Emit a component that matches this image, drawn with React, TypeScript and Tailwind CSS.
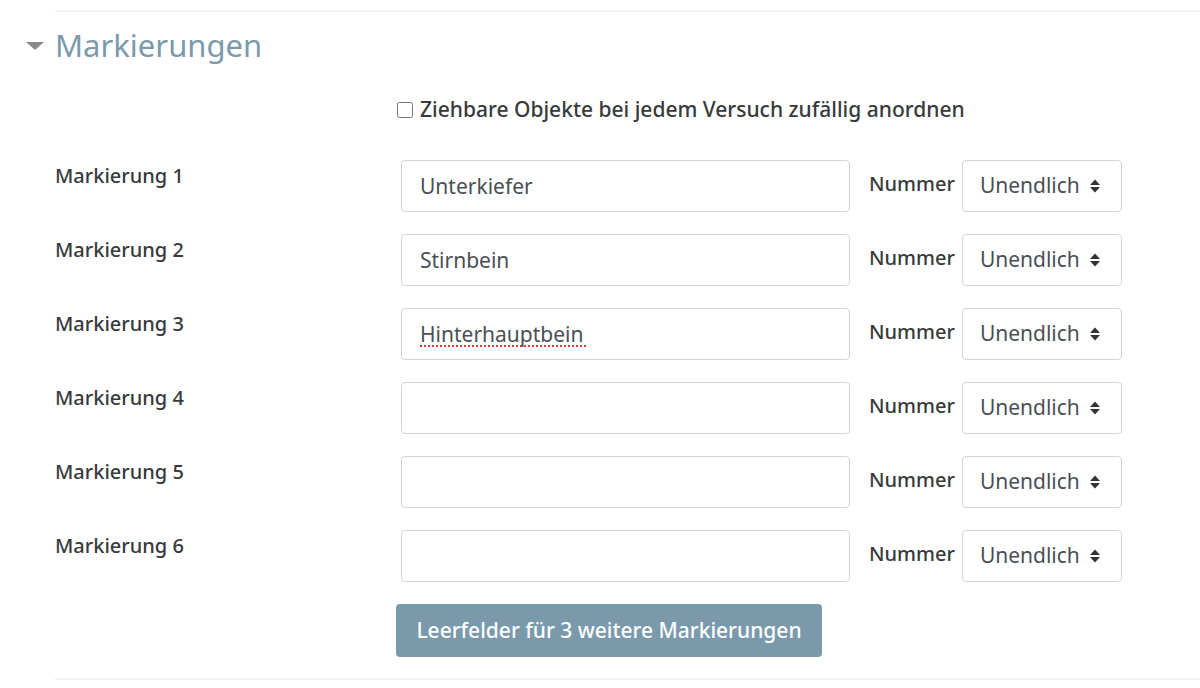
import React, { useState } from "react";

const rows = [
  { label: "Markierung 1", value: "Unterkiefer" },
  { label: "Markierung 2", value: "Stirnbein" },
  { label: "Markierung 3", value: "Hinterhauptbein" },
  { label: "Markierung 4", value: "" },
  { label: "Markierung 5", value: "" },
  { label: "Markierung 6", value: "" },
];

const App = () => {
  const [shuffle, setShuffle] = useState(false);
  const [values, setValues] = useState(rows.map((r) => r.value));

  return (
    <div
      className="w-[1200px] h-[688px] bg-white overflow-hidden text-[#373a3c]"
      style={{ fontFamily: '"Noto Sans", "Open Sans", sans-serif' }}
    >
      <div className="ml-[55px] pt-[10px]">
        <div className="border-t-2 border-[#f2f2f2]" />
      </div>

      <div className="flex items-center h-[50px] mt-[8px]">
        <svg width="18" height="10" viewBox="0 0 18 10" className="ml-[26px] mr-[11px] mt-[2px]">
          <path d="M0 1 L18 1 L9 9 Z" fill="#8a8a8a" />
        </svg>
        <h2 className="text-[31px] text-[#7a9aab] leading-none font-normal">Markierungen</h2>
      </div>

      <label className="flex items-center ml-[397px] mt-[25px] h-[30px]">
        <input
          type="checkbox"
          checked={shuffle}
          onChange={(e) => setShuffle(e.target.checked)}
          className="w-[16px] h-[16px] mr-[7px] accent-[#7a9aab]"
        />
        <span className="text-[21px] font-medium">Ziehbare Objekte bei jedem Versuch zufällig anordnen</span>
      </label>

      <div className="flex flex-col gap-[22px] mt-[35px]">
        {rows.map((r, i) => (
          <div key={r.label} className="flex items-start">
            <div className="w-[401px] pl-[55px] pt-[2px] text-[20px] font-medium leading-[28px]">{r.label}</div>
            <div className="relative">
              <input
                type="text"
                value={values[i]}
                spellCheck={false}
                onChange={(e) => {
                  const next = [...values];
                  next[i] = e.target.value;
                  setValues(next);
                }}
                className="w-[449px] h-[52px] border border-[#d4d4d4] rounded-[4px] px-[18px] text-[21px] text-[#4a4f55] outline-none"
              />
              {i === 2 && values[2] === "Hinterhauptbein" && (
                <span className="absolute left-[19px] top-[37px] w-[166px] border-b-2 border-dotted border-[#e53935] pointer-events-none" />
              )}
            </div>
            <div className="ml-[19px] pt-[10px] text-[20px] font-medium leading-[28px]">Nummer</div>
            <div className="ml-[7px] w-[160px] h-[52px] border border-[#d4d4d4] rounded-[4px] flex items-center pl-[17px] text-[21px] text-[#4a4f55]">
              <span>Unendlich</span>
              <svg width="12" height="16" viewBox="0 0 12 16" className="ml-[9px]">
                <path d="M1 7 L6 1.5 L11 7 Z" fill="#333" />
                <path d="M1 9 L6 14.5 L11 9 Z" fill="#333" />
              </svg>
            </div>
          </div>
        ))}
      </div>

      <button
        type="button"
        className="ml-[396px] mt-[22px] w-[426px] h-[53px] bg-[#7a9aab] rounded-[4px] text-white text-[21px] font-medium"
      >
        Leerfelder für 3 weitere Markierungen
      </button>

      <div className="ml-[55px] mt-[21px] border-t-2 border-[#f2f2f2]" />
    </div>
  );
};

export default App;
